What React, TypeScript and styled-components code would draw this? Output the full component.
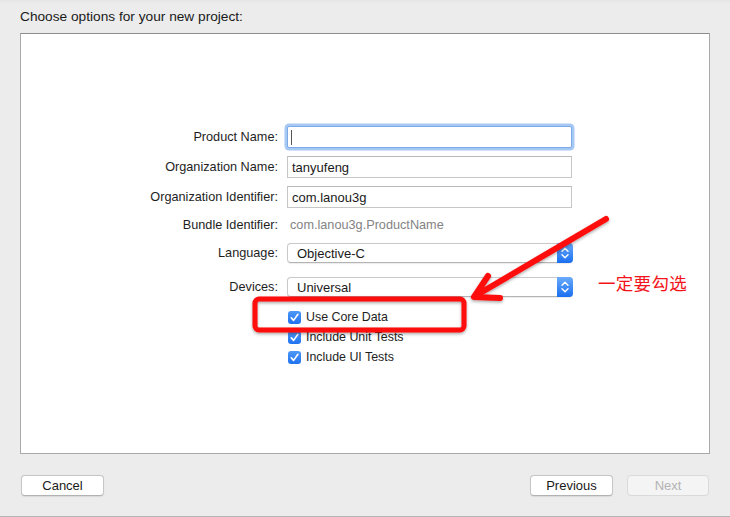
import React from 'react'
import styled, { createGlobalStyle } from 'styled-components'

const GlobalStyle = createGlobalStyle`
    html, body {
        margin: 0;
        padding: 0;
        background: #ececec;
    }
    body {
        font-family: 'Liberation Sans', Arial, sans-serif;
        font-size: 12.7px;
        color: #1e1e1e;
    }
`

interface Field {
    label: string;
    value?: string;
    kind: 'focus' | 'text' | 'static' | 'popup';
    gap: number;
}

const fields: Field[] = [
    { label: 'Product Name:', kind: 'focus', gap: 0 },
    { label: 'Organization Name:', value: 'tanyufeng', kind: 'text', gap: 8 },
    { label: 'Organization Identifier:', value: 'com.lanou3g', kind: 'text', gap: 8 },
    { label: 'Bundle Identifier:', value: 'com.lanou3g.ProductName', kind: 'static', gap: 6 },
    { label: 'Language:', value: 'Objective-C', kind: 'popup', gap: 7 },
    { label: 'Devices:', value: 'Universal', kind: 'popup', gap: 14 },
]

const options = [
    { label: 'Use Core Data', gap: 10 },
    { label: 'Include Unit Tests', gap: 0 },
    { label: 'Include UI Tests', gap: 0 },
]

const Stepper = () => (
    <StepperStyled>
        <svg width="16" height="20" viewBox="0 0 16 20">
            <path d="M5 8.2 L8 5.2 L11 8.2" fill="none" stroke="white" strokeWidth="1.4" strokeLinecap="round" strokeLinejoin="round" />
            <path d="M5 11.8 L8 14.8 L11 11.8" fill="none" stroke="white" strokeWidth="1.4" strokeLinecap="round" strokeLinejoin="round" />
        </svg>
    </StepperStyled>
)

const Check = () => (
    <CheckBox>
        <svg width="13" height="13" viewBox="0 0 13 13">
            <path d="M3.3 6.9 L5.6 9.4 L9.9 3.3" fill="none" stroke="white" strokeWidth="1.6" strokeLinecap="round" strokeLinejoin="round" />
        </svg>
    </CheckBox>
)

const renderField = (f: Field) => {
    switch (f.kind) {
        case 'focus':
            return (
                <Input $focus>
                    <Caret />
                </Input>
            )
        case 'text':
            return <Input>{f.value}</Input>
        case 'static':
            return <StaticValue>{f.value}</StaticValue>
        default:
            return (
                <Popup>
                    <PopupText>{f.value}</PopupText>
                    <Stepper />
                </Popup>
            )
    }
}

const App = () => {
    return (
        <React.Fragment>
            <GlobalStyle />
            <Window>
                <Title>Choose options for your new project:</Title>
                <Panel>
                    <Form>
                        {fields.map((f) => (
                            <Row key={f.label} $gap={f.gap} $height={f.kind === 'popup' ? 20 : 22}>
                                <Label>{f.label}</Label>
                                {renderField(f)}
                            </Row>
                        ))}
                        {options.map((o) => (
                            <Row key={o.label} $gap={o.gap} $height={20}>
                                <Label />
                                <Option>
                                    <Check />
                                    <span>{o.label}</span>
                                </Option>
                            </Row>
                        ))}
                    </Form>
                </Panel>
                <Footer>
                    <Button $width={83}>Cancel</Button>
                    <RightButtons>
                        <Button $width={83}>Previous</Button>
                        <Button $width={82} disabled>Next</Button>
                    </RightButtons>
                </Footer>
                <Annotation>
                    <svg width="730" height="517" viewBox="0 0 730 517">
                        <defs>
                            <filter id="shadow" x="-10%" y="-10%" width="120%" height="130%">
                                <feDropShadow dx="0" dy="1.5" stdDeviation="1.5" floodColor="#000" floodOpacity="0.35" />
                            </filter>
                        </defs>
                        <g filter="url(#shadow)" stroke="#fe0a0a" fill="none" strokeLinecap="round" strokeLinejoin="round">
                            <rect x="255" y="299" width="209" height="31" rx="4" strokeWidth="5" />
                            <path d="M606 219 L475 296" strokeWidth="6" />
                            <path d="M488 276 L474 297 L500 298" strokeWidth="6" />
                        </g>
                    </svg>
                    <Note>一定要勾选</Note>
                </Annotation>
            </Window>
        </React.Fragment>
    )
}

export default App

const Window = styled.div`
    position: relative;
    width: 730px;
    height: 517px;
    box-sizing: border-box;
    background: linear-gradient(#e4e4e4, #ececec 3px);
    border-bottom: 1px solid #b4b4b4;
    display: flex;
    flex-direction: column;
    overflow: hidden;
`

const Title = styled.div`
    height: 33px;
    box-sizing: border-box;
    padding: 9px 0 0 20px;
    font-size: 13.7px;
    color: #1a1a1a;
`

const Panel = styled.div`
    margin: 0 20px;
    height: 421px;
    box-sizing: border-box;
    background: #fff;
    border: 1px solid #a9a9a9;
    border-top-color: #8e8e8e;
`

const Form = styled.div`
    display: flex;
    flex-direction: column;
    padding-top: 92px;
`

const Row = styled.div<{ $gap: number; $height: number }>`
    display: flex;
    align-items: center;
    height: ${(p) => p.$height}px;
    margin-top: ${(p) => p.$gap}px;
`

const Label = styled.div`
    width: 257px;
    flex: none;
    text-align: right;
    margin-right: 9px;
    color: #1e1e1e;
`

const Input = styled.div<{ $focus?: boolean }>`
    width: 285px;
    height: 22px;
    box-sizing: border-box;
    border: 1px solid ${(p) => (p.$focus ? '#7fa9e6' : '#c6c6c6')};
    border-top-color: ${(p) => (p.$focus ? '#7fa9e6' : '#b9b9b9')};
    border-radius: ${(p) => (p.$focus ? '2px' : '0')};
    box-shadow: ${(p) => (p.$focus ? '0 0 0 2.5px #a6c8f4' : 'none')};
    display: flex;
    align-items: center;
    padding-left: 4px;
    font-size: 13px;
    color: #1a1a1a;
    background: #fff;
`

const Caret = styled.div`
    width: 1px;
    height: 15px;
    background: #555;
    margin-left: -1px;
`

const StaticValue = styled.div`
    padding-left: 3px;
    color: #838383;
`

const Popup = styled.div`
    width: 286px;
    height: 20px;
    box-sizing: border-box;
    border: 1px solid #c9c9c9;
    border-bottom-color: #b4b4b4;
    border-radius: 4px;
    display: flex;
    align-items: stretch;
    background: #fff;
    box-shadow: 0 0.5px 1px rgba(0, 0, 0, 0.08);
`

const PopupText = styled.div`
    flex: 1;
    display: flex;
    align-items: center;
    padding-left: 9px;
    font-size: 13px;
    color: #1a1a1a;
`

const StepperStyled = styled.div`
    width: 16px;
    margin: -1px -1px -1px 0;
    border-radius: 0 4px 4px 0;
    background: linear-gradient(#6aabfb, #1a6ff0);
    display: flex;
    align-items: center;
    justify-content: center;
`

const Option = styled.div`
    display: flex;
    align-items: center;
    gap: 5px;
    color: #1e1e1e;
    font-size: 12.4px;
`

const CheckBox = styled.div`
    width: 13px;
    height: 13px;
    border-radius: 3px;
    background: linear-gradient(#4f98f8, #1f72ef);
    margin-left: 1px;
    display: flex;
`

const Footer = styled.div`
    display: flex;
    justify-content: space-between;
    padding: 21px 21px 0 21px;
`

const RightButtons = styled.div`
    display: flex;
    gap: 14px;
`

const Button = styled.button<{ $width: number }>`
    width: ${(p) => p.$width}px;
    height: 21px;
    box-sizing: border-box;
    padding: 0;
    font-family: 'Liberation Sans', Arial, sans-serif;
    font-size: 13px;
    color: #1a1a1a;
    background: #fff;
    border: 1px solid #c6c6c6;
    border-bottom-color: #b2b2b2;
    border-radius: 4px;
    box-shadow: 0 0.5px 1px rgba(0, 0, 0, 0.08);
    &:disabled {
        color: #b3b3b3;
        background: #f4f4f4;
        border-color: #dadada;
        box-shadow: none;
    }
`

const Annotation = styled.div`
    position: absolute;
    inset: 0;
    pointer-events: none;
    svg {
        position: absolute;
        left: 0;
        top: 0;
    }
`

const Note = styled.div`
    position: absolute;
    left: 598px;
    top: 273px;
    font-family: 'Noto Sans CJK SC', sans-serif;
    font-size: 17.5px;
    line-height: 20px;
    color: #f2141a;
    letter-spacing: 0.3px;
`
